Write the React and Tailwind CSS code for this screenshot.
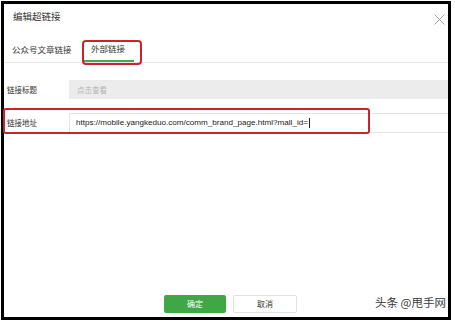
import React from "react";

const cjk = { fontFamily: '"Noto Sans CJK SC", "Noto Sans", sans-serif' };
const latin = { fontFamily: '"Liberation Sans", "Noto Sans CJK SC", sans-serif' };

export default function App() {
  return (
    <div className="relative w-[455px] h-[322px] bg-white overflow-hidden" style={cjk}>
      <div className="ml-[1px] mt-[1px] w-[450px] h-[319px] border-[3px] border-black flex flex-col text-[#333]">
        {/* header */}
        <div className="h-[26px] flex items-center justify-between pl-[9px] pr-[3px]">
          <span className="text-[9.5px] leading-none">编辑超链接</span>
          <svg width="11" height="11" viewBox="0 0 11 11" className="mt-[5px]">
            <path d="M0.5 0.5 L10.5 10.5 M10.5 0.5 L0.5 10.5" stroke="#9a9a9a" strokeWidth="0.9" fill="none" />
          </svg>
        </div>

        {/* tabs */}
        <div className="h-[33px] flex border-b border-[#e8e8e8] text-[8.5px] leading-none">
          <div className="h-[32px] flex items-center pt-[6px] pl-[8px] w-[80px]">公众号文章链接</div>
          <div className="h-[32px] w-[50px] flex items-center pt-[6px] pl-[7px] border-b-2 border-[#4fa457]">外部链接</div>
        </div>

        {/* link title row */}
        <div className="mt-[17px] h-[19px] flex items-center text-[7.5px] leading-none">
          <div className="w-[65px] pl-[3px]">链接标题</div>
          <div className="flex-1 h-full bg-[#ececec] flex items-center pl-[8px] text-[#b4b4b4]">点击查看</div>
        </div>

        {/* link address row */}
        <div className="mt-[14px] h-[20px] flex items-center text-[7.5px] leading-none">
          <div className="w-[65px] pl-[3px]">链接地址</div>
          <div className="flex-1 h-full border-y border-l border-[#e4e4e4] flex items-center pl-[6px] text-[#222]">
            <span className="text-[8.1px]" style={latin}>https://mobile.yangkeduo.com/comm_brand_page.html?mall_id=</span>
            <span className="ml-[1px] h-[10px] border-l border-[#222]" />
          </div>
        </div>

        <div className="flex-1" />

        {/* buttons */}
        <div className="flex pl-[160px] gap-[7px] pb-[4px] text-[8px] leading-none">
          <div className="w-[62px] h-[18px] rounded-[2px] bg-[#40a747] text-white flex items-center justify-center">确定</div>
          <div className="w-[64px] h-[18px] rounded-[2px] border border-[#e2e2e2] bg-white flex items-center justify-center">取消</div>
        </div>
      </div>

      {/* annotation boxes */}
      <div className="absolute left-[82px] top-[40px] w-[60px] h-[25px] border-2 border-[#cc2229] rounded-[4px]" />
      <div className="absolute left-[3px] top-[108px] w-[367px] h-[26px] border-2 border-[#cc2229] rounded-[3px]" />

      {/* watermark */}
      <div className="absolute left-[375px] top-[297px] text-[11.5px] leading-none text-[#3a3a3a] whitespace-nowrap">头条 @甩手网</div>
    </div>
  );
}
